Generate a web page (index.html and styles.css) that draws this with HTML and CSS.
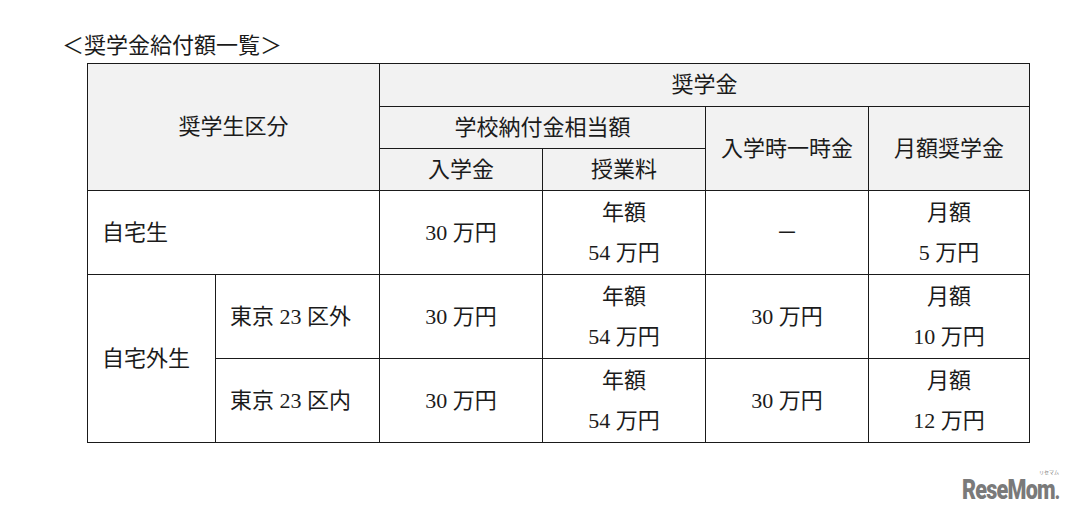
FILE: index.html
```html
<!DOCTYPE html>
<html lang="ja">
<head>
<meta charset="utf-8">
<link rel="stylesheet" href="styles.css">
</head>
<body>
<div class="page">
  <h1 class="title">＜奨学金給付額一覧＞</h1>
  <table class="grid">
    <colgroup>
      <col class="c1"><col class="c2"><col class="c3"><col class="c4"><col class="c5"><col class="c6"><col class="c7">
    </colgroup>
    <tr class="h1">
      <th colspan="2" rowspan="3">奨学生区分</th>
      <th colspan="4">奨学金</th>
    </tr>
    <tr class="h2">
      <th colspan="2">学校納付金相当額</th>
      <th rowspan="2">入学時一時金</th>
      <th rowspan="2">月額奨学金</th>
    </tr>
    <tr class="h3">
      <th>入学金</th>
      <th>授業料</th>
    </tr>
    <tr class="r">
      <td colspan="2" class="lbl">自宅生</td>
      <td>30 万円</td>
      <td>年額<br>54 万円</td>
      <td>－</td>
      <td>月額<br>5 万円</td>
    </tr>
    <tr class="r">
      <td rowspan="2" class="lbl">自宅外生</td>
      <td class="lbl">東京 23 区外</td>
      <td>30 万円</td>
      <td>年額<br>54 万円</td>
      <td>30 万円</td>
      <td>月額<br>10 万円</td>
    </tr>
    <tr class="r">
      <td class="lbl">東京 23 区内</td>
      <td>30 万円</td>
      <td>年額<br>54 万円</td>
      <td>30 万円</td>
      <td>月額<br>12 万円</td>
    </tr>
  </table>
  <div class="logo"><span class="kana">リセマム</span><span class="word">ReseMom<span class="dot">.</span></span></div>
</div>
</body>
</html>
```

FILE: styles.css
```css
html, body {
  margin: 0;
  padding: 0;
  background: #ffffff;
}
.page {
  position: relative;
  width: 1074px;
  height: 511px;
  overflow: hidden;
  font-family: "Liberation Serif", "Noto Sans CJK JP", serif;
  color: #1b1b1b;
}
.title {
  margin: 0;
  padding: 32px 0 0 62px;
  font-size: 22px;
  font-weight: 400;
  line-height: 28px;
  height: 31px;
}
.grid {
  margin-left: 87px;
  margin-top: 0;
  border-collapse: collapse;
  table-layout: fixed;
  width: 943px;
  font-size: 22px;
}
.c1 { width: 128px; }
.c2 { width: 164px; }
.c3 { width: 163px; }
.c4 { width: 163px; }
.c5 { width: 163px; }
.c6 { width: 161px; }
.c7 { width: 163px; }
.grid th, .grid td {
  border: 1px solid #1a1a1a;
  padding: 0;
  text-align: center;
  vertical-align: middle;
  font-weight: 400;
  line-height: 40px;
}
.grid th {
  background: #f2f2f2;
}
.h1 { height: 43px; }
.h2 { height: 42px; }
.h3 { height: 42px; }
.r { height: 84px; }
.grid td.lbl {
  text-align: left;
  padding-left: 14px;
}
.logo {
  position: absolute;
  left: 962px;
  top: 476px;
  width: 100px;
  height: 28px;
}
.word {
  display: block;
  font-family: "Roboto", "Liberation Sans", sans-serif;
  font-weight: 900;
  font-size: 27px;
  letter-spacing: -1px;
  color: #7a7a7a;
  line-height: 28px;
  height: 28px;
  white-space: nowrap;
  transform: scaleX(0.8);
  transform-origin: left center;
}
.kana {
  position: absolute;
  left: 77px;
  top: -7px;
  font-family: "Noto Sans CJK JP", sans-serif;
  font-size: 5px;
  color: #7a7a7a;
  line-height: 6px;
  height: 6px;
  font-weight: 400;
  white-space: nowrap;
}
.dot {
  font-size: 22px;
}
```
